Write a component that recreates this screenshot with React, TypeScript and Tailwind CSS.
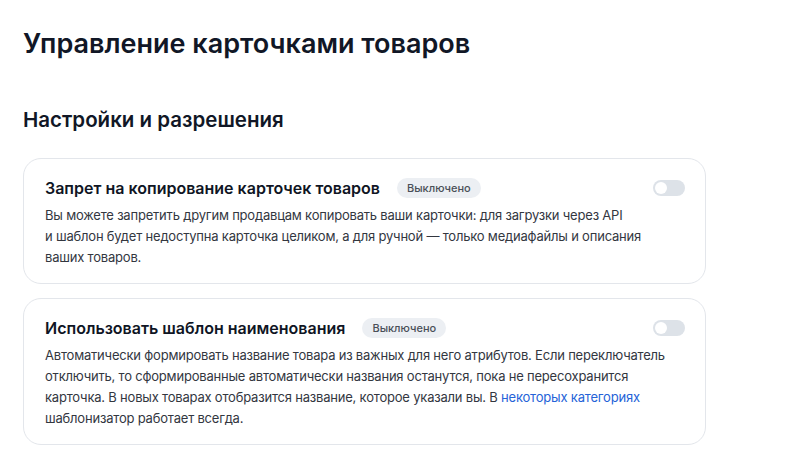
function Toggle() {
  return (
    <div className="flex h-[16px] w-[32px] shrink-0 items-center rounded-full bg-[#dde2e8] px-[2px]">
      <div className="h-[12px] w-[12px] rounded-full bg-white" />
    </div>
  )
}

function Badge({ children }: { children: string }) {
  return (
    <span className="inline-flex h-[20px] items-center rounded-full bg-[#eceff3] px-[10px] text-[11px] font-medium text-[#4a4f58]">
      {children}
    </span>
  )
}

type SettingCardProps = {
  title: string
  status: string
  children: React.ReactNode
}

function SettingCard({ title, status, children }: SettingCardProps) {
  return (
    <section className="rounded-[18px] border border-[#e3e6eb] bg-white pl-[21px] pr-[20px] pt-[17px] pb-[15px]">
      <div className="flex items-center justify-between">
        <div className="flex items-center gap-[17px]">
          <h3 className="text-[16px] font-semibold leading-[24px] text-[#0f1524]">{title}</h3>
          <Badge>{status}</Badge>
        </div>
        <Toggle />
      </div>
      <p className="mt-[5px] whitespace-nowrap text-[13px] leading-[21px] tracking-[-0.2px] text-[#33373f]">
        {children}
      </p>
    </section>
  )
}

export default function App() {
  return (
    <div className="min-h-[466px] w-[800px] bg-white px-[23px] pt-[24px] font-['Inter','Noto_Sans',sans-serif]">
      <h1 className="text-[27px] font-semibold leading-[40px] text-[#111726]">
        Управление карточками товаров
      </h1>
      <h2 className="mt-[42px] text-[20.5px] font-semibold leading-[28px] text-[#111726]">
        Настройки и разрешения
      </h2>
      <div className="mt-[24px] flex w-[683px] flex-col gap-[14px]">
        <SettingCard title="Запрет на копирование карточек товаров" status="Выключено">
          Вы можете запретить другим продавцам копировать ваши карточки: для загрузки через API
          <br />
          и шаблон будет недоступна карточка целиком, а для ручной — только медиафайлы и описания
          <br />
          ваших товаров.
        </SettingCard>
        <SettingCard title="Использовать шаблон наименования" status="Выключено">
          Автоматически формировать название товара из важных для него атрибутов. Если переключатель
          <br />
          отключить, то сформированные автоматически названия останутся, пока не пересохранится
          <br />
          карточка. В новых товарах отобразится название, которое указали вы. В{' '}
          <a href="#" className="text-[#2563d8]">некоторых категориях</a>
          <br />
          шаблонизатор работает всегда.
        </SettingCard>
      </div>
    </div>
  )
}
